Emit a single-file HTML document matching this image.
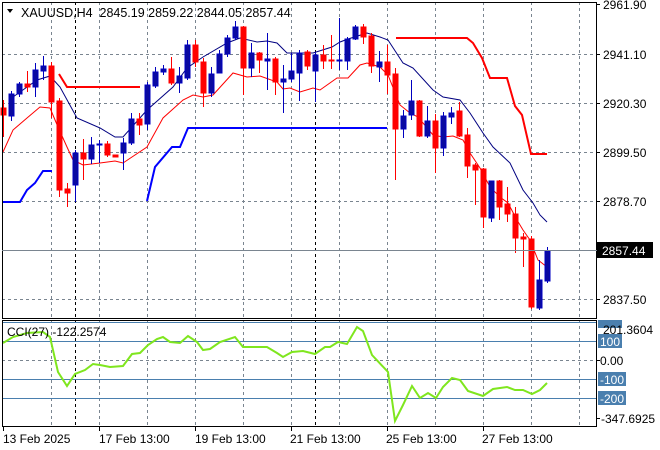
<!DOCTYPE html>
<html><head><meta charset="utf-8"><style>
body{margin:0;background:#fff;width:660px;height:450px;overflow:hidden}
svg{display:block;font-family:"Liberation Sans",sans-serif;font-size:12px}
</style></head><body>
<svg width="660" height="450" viewBox="0 0 660 450" xmlns="http://www.w3.org/2000/svg">
<rect width="660" height="450" fill="#fff"/>
<g stroke="#7a8590" stroke-dasharray="3,3" stroke-width="1">
<line x1="51.5" y1="2" x2="51.5" y2="318"/><line x1="99.5" y1="2" x2="99.5" y2="318"/><line x1="147.5" y1="2" x2="147.5" y2="318"/><line x1="195.5" y1="2" x2="195.5" y2="318"/><line x1="243.5" y1="2" x2="243.5" y2="318"/><line x1="291.5" y1="2" x2="291.5" y2="318"/><line x1="339.5" y1="2" x2="339.5" y2="318"/><line x1="387.5" y1="2" x2="387.5" y2="318"/><line x1="435.5" y1="2" x2="435.5" y2="318"/><line x1="483.5" y1="2" x2="483.5" y2="318"/><line x1="531.5" y1="2" x2="531.5" y2="318"/><line x1="579.5" y1="2" x2="579.5" y2="318"/>
<line x1="51.5" y1="320" x2="51.5" y2="426"/><line x1="99.5" y1="320" x2="99.5" y2="426"/><line x1="147.5" y1="320" x2="147.5" y2="426"/><line x1="195.5" y1="320" x2="195.5" y2="426"/><line x1="243.5" y1="320" x2="243.5" y2="426"/><line x1="291.5" y1="320" x2="291.5" y2="426"/><line x1="339.5" y1="320" x2="339.5" y2="426"/><line x1="387.5" y1="320" x2="387.5" y2="426"/><line x1="435.5" y1="320" x2="435.5" y2="426"/><line x1="483.5" y1="320" x2="483.5" y2="426"/><line x1="531.5" y1="320" x2="531.5" y2="426"/><line x1="579.5" y1="320" x2="579.5" y2="426"/>
<line x1="2" y1="54.5" x2="596" y2="54.5"/><line x1="2" y1="103.5" x2="596" y2="103.5"/><line x1="2" y1="152.5" x2="596" y2="152.5"/><line x1="2" y1="201.5" x2="596" y2="201.5"/><line x1="2" y1="250.5" x2="596" y2="250.5"/><line x1="2" y1="299.5" x2="596" y2="299.5"/>
<line x1="2" y1="360.5" x2="596" y2="360.5"/>
</g>
<g stroke="#000" stroke-dasharray="3,3"><line x1="75.5" y1="2" x2="75.5" y2="318"/><line x1="315.5" y1="2" x2="315.5" y2="318"/><line x1="75.5" y1="320" x2="75.5" y2="426"/><line x1="315.5" y1="320" x2="315.5" y2="426"/></g>
<g stroke="#4a7fae"><line x1="2" y1="322.5" x2="596" y2="322.5"/><line x1="2" y1="341.5" x2="596" y2="341.5"/><line x1="2" y1="379.5" x2="596" y2="379.5"/><line x1="2" y1="398.5" x2="596" y2="398.5"/></g>
<polyline fill="none" stroke="#ff0000" stroke-width="1" points="3,152 13,130 27,118 40,107 50,108 58,127 67,147 73,160 83,165 100,163 115,161 123,163 147,147 163,118 183,100 193,95 203,97 213,95 233,73 247,77 260,76 277,82 283,89 290,88 300,92 313,88 320,90 337,78 348,78 360,65 367,63 380,67 388,75 400,105 410,113 418,117 433,135 443,137 453,136 463,140 470,153 480,168 490,187 500,197 508,203 517,220 523,230 530,240 538,260 547,267"/>
<polyline fill="none" stroke="#000080" stroke-width="1" points="13,97 37,80 50,76 60,87 77,118 100,128 115,137 123,137 147,110 173,87 187,68 203,57 227,43 240,38 257,42 267,41 277,43 287,53 313,53 332,47 340,42 348,39 367,33 380,37 388,40 403,63 413,68 433,90 443,97 460,100 470,113 483,133 493,147 510,163 523,190 533,203 540,215 547,222"/>
<polyline fill="none" stroke="#ff0000" stroke-width="2" points="59,74 67,87 140,87"/>
<polyline fill="none" stroke="#ff0000" stroke-width="2" points="396,38 467,38 473,43 482,58 490,78 507,78 515,106 522,115 531,154 547,154"/>
<polyline fill="none" stroke="#0000ff" stroke-width="2" points="3,202 20,202 27,190 35,183 43,171 52,171"/>
<polyline fill="none" stroke="#0000ff" stroke-width="2" points="147,201 155,167 172,147 180,147 188,128 235,128 387,128"/>
<g stroke-width="1">
<g stroke="#ff0000" fill="#ff0000">
<line x1="3.5" y1="100" x2="3.5" y2="137"/><rect x="1" y="108" width="5" height="7"/>
<line x1="27.5" y1="71" x2="27.5" y2="92"/><rect x="25" y="84" width="5" height="3"/>
<line x1="51.5" y1="62" x2="51.5" y2="118"/><rect x="49" y="66" width="5" height="36"/>
<line x1="59.5" y1="98" x2="59.5" y2="197"/><rect x="57" y="101" width="5" height="89"/>
<line x1="67.5" y1="183" x2="67.5" y2="207"/><rect x="65" y="189" width="5" height="4"/>
<line x1="83.5" y1="139" x2="83.5" y2="180"/><rect x="81" y="153" width="5" height="6"/>
<line x1="107.5" y1="141" x2="107.5" y2="157"/><rect x="105" y="144" width="5" height="11"/>
<rect x="113" y="155" width="5" height="2"/>
<line x1="139.5" y1="113" x2="139.5" y2="135"/><rect x="137" y="119" width="5" height="6"/>
<line x1="171.5" y1="57" x2="171.5" y2="85"/><rect x="169" y="69" width="5" height="14"/>
<line x1="195.5" y1="40" x2="195.5" y2="67"/><rect x="193" y="45" width="5" height="17"/>
<line x1="203.5" y1="58" x2="203.5" y2="107"/><rect x="201" y="62" width="5" height="31"/>
<line x1="243.5" y1="26" x2="243.5" y2="95"/><rect x="241" y="27" width="5" height="41"/>
<line x1="259.5" y1="52" x2="259.5" y2="73"/><rect x="257" y="53" width="5" height="7"/>
<line x1="275.5" y1="57" x2="275.5" y2="95"/><rect x="273" y="59" width="5" height="23"/>
<line x1="307.5" y1="50" x2="307.5" y2="70"/><rect x="305" y="52" width="5" height="14"/>
<line x1="323.5" y1="45" x2="323.5" y2="69"/><rect x="321" y="55" width="5" height="6"/>
<line x1="331.5" y1="35" x2="331.5" y2="69"/><rect x="329" y="60" width="5" height="1"/>
<line x1="363.5" y1="24" x2="363.5" y2="44"/><rect x="361" y="27" width="5" height="10"/>
<line x1="371.5" y1="33" x2="371.5" y2="73"/><rect x="369" y="36" width="5" height="30"/>
<line x1="387.5" y1="45" x2="387.5" y2="94"/><rect x="385" y="62" width="5" height="13"/>
<line x1="395.5" y1="68" x2="395.5" y2="180"/><rect x="393" y="74" width="5" height="55"/>
<line x1="419.5" y1="100" x2="419.5" y2="137"/><rect x="417" y="101" width="5" height="35"/>
<line x1="435.5" y1="114" x2="435.5" y2="173"/><rect x="433" y="121" width="5" height="27"/>
<line x1="459.5" y1="102" x2="459.5" y2="137"/><rect x="457" y="111" width="5" height="25"/>
<line x1="467.5" y1="128" x2="467.5" y2="178"/><rect x="465" y="135" width="5" height="31"/>
<line x1="475.5" y1="163" x2="475.5" y2="205"/><rect x="473" y="165" width="5" height="5"/>
<line x1="483.5" y1="168" x2="483.5" y2="228"/><rect x="481" y="169" width="5" height="48"/>
<line x1="499.5" y1="180" x2="499.5" y2="220"/><rect x="497" y="181" width="5" height="26"/>
<line x1="507.5" y1="187" x2="507.5" y2="222"/><rect x="505" y="204" width="5" height="10"/>
<line x1="515.5" y1="207" x2="515.5" y2="253"/><rect x="513" y="214" width="5" height="24"/>
<line x1="523.5" y1="233" x2="523.5" y2="267"/><rect x="521" y="237" width="5" height="2"/>
<line x1="531.5" y1="236" x2="531.5" y2="309"/><rect x="529" y="239" width="5" height="68"/>
</g>
<g stroke="#0000c0" fill="#0a0aa0">
<line x1="11.5" y1="91" x2="11.5" y2="121"/><rect x="9" y="94" width="5" height="22"/>
<line x1="19.5" y1="82" x2="19.5" y2="97"/><rect x="17" y="84" width="5" height="10"/>
<line x1="35.5" y1="63" x2="35.5" y2="97"/><rect x="33" y="70" width="5" height="17"/>
<line x1="43.5" y1="56" x2="43.5" y2="80"/><rect x="41" y="66" width="5" height="5"/>
<line x1="75.5" y1="150" x2="75.5" y2="202"/><rect x="73" y="153" width="5" height="32"/>
<line x1="91.5" y1="137" x2="91.5" y2="164"/><rect x="89" y="145" width="5" height="14"/>
<line x1="99.5" y1="140" x2="99.5" y2="163"/><rect x="97" y="144" width="5" height="1"/>
<line x1="123.5" y1="138" x2="123.5" y2="170"/><rect x="121" y="143" width="5" height="10"/>
<line x1="131.5" y1="113" x2="131.5" y2="145"/><rect x="129" y="119" width="5" height="24"/>
<line x1="147.5" y1="82" x2="147.5" y2="130"/><rect x="145" y="85" width="5" height="39"/>
<line x1="155.5" y1="67" x2="155.5" y2="88"/><rect x="153" y="72" width="5" height="14"/>
<line x1="163.5" y1="65" x2="163.5" y2="75"/><rect x="161" y="69" width="5" height="3"/>
<line x1="179.5" y1="67" x2="179.5" y2="93"/><rect x="177" y="76" width="5" height="7"/>
<line x1="187.5" y1="40" x2="187.5" y2="80"/><rect x="185" y="45" width="5" height="33"/>
<line x1="211.5" y1="67" x2="211.5" y2="97"/><rect x="209" y="74" width="5" height="19"/>
<line x1="219.5" y1="50" x2="219.5" y2="73"/><rect x="217" y="54" width="5" height="19"/>
<line x1="227.5" y1="35" x2="227.5" y2="57"/><rect x="225" y="38" width="5" height="16"/>
<line x1="235.5" y1="21" x2="235.5" y2="40"/><rect x="233" y="27" width="5" height="11"/>
<line x1="251.5" y1="43" x2="251.5" y2="77"/><rect x="249" y="53" width="5" height="15"/>
<line x1="267.5" y1="33" x2="267.5" y2="90"/><rect x="265" y="59" width="5" height="2"/>
<line x1="283.5" y1="65" x2="283.5" y2="113"/><rect x="281" y="79" width="5" height="3"/>
<line x1="291.5" y1="53" x2="291.5" y2="82"/><rect x="289" y="71" width="5" height="8"/>
<line x1="299.5" y1="50" x2="299.5" y2="101"/><rect x="297" y="53" width="5" height="20"/>
<line x1="315.5" y1="52" x2="315.5" y2="102"/><rect x="313" y="55" width="5" height="16"/>
<line x1="339.5" y1="18" x2="339.5" y2="70"/><rect x="337" y="60" width="5" height="1"/>
<line x1="347.5" y1="37" x2="347.5" y2="70"/><rect x="345" y="39" width="5" height="22"/>
<line x1="355.5" y1="25" x2="355.5" y2="40"/><rect x="353" y="27" width="5" height="12"/>
<line x1="379.5" y1="51" x2="379.5" y2="82"/><rect x="377" y="62" width="5" height="5"/>
<line x1="403.5" y1="110" x2="403.5" y2="138"/><rect x="401" y="116" width="5" height="13"/>
<line x1="411.5" y1="80" x2="411.5" y2="120"/><rect x="409" y="101" width="5" height="14"/>
<line x1="427.5" y1="106" x2="427.5" y2="138"/><rect x="425" y="121" width="5" height="15"/>
<line x1="443.5" y1="112" x2="443.5" y2="156"/><rect x="441" y="116" width="5" height="32"/>
<line x1="451.5" y1="107" x2="451.5" y2="124"/><rect x="449" y="113" width="5" height="4"/>
<line x1="491.5" y1="181" x2="491.5" y2="222"/><rect x="489" y="181" width="5" height="37"/>
<line x1="539.5" y1="260" x2="539.5" y2="310"/><rect x="537" y="280" width="5" height="28"/>
<line x1="547.5" y1="247" x2="547.5" y2="283"/><rect x="545" y="251" width="5" height="30"/>
</g>
</g>
<polyline fill="none" stroke="#7fe61e" stroke-width="2" points="3,343 13,337 27,333 43,332 50,337 58,372 67,386 75,374 85,370 93,364 100,365 110,367 123,366 132,354 140,353 148,345 157,339 163,337 170,342 180,343 188,336 197,342 203,350 210,349 220,342 235,337 243,347 257,347 267,347 277,353 283,357 292,352 303,351 315,354 325,347 330,347 338,342 347,344 357,327 363,331 372,355 388,372 395,421 403,405 412,386 420,398 428,393 436,398 443,387 452,378 460,380 468,391 483,396 493,389 507,387 515,390 523,390 532,394 540,390 547,383"/>
<rect x="2.5" y="2.5" width="594" height="316" fill="none" stroke="#000"/>
<rect x="2.5" y="320.5" width="594" height="106" fill="none" stroke="#000"/>
<line x1="2" y1="250.5" x2="600" y2="250.5" stroke="#7a8590"/>
<g stroke="#000">
<line x1="596" y1="4.5" x2="600" y2="4.5"/><line x1="596" y1="54.5" x2="600" y2="54.5"/><line x1="596" y1="103.5" x2="600" y2="103.5"/><line x1="596" y1="152.5" x2="600" y2="152.5"/><line x1="596" y1="201.5" x2="600" y2="201.5"/><line x1="596" y1="299.5" x2="600" y2="299.5"/>
<line x1="596" y1="360.5" x2="600" y2="360.5"/><line x1="596" y1="418.5" x2="600" y2="418.5"/>
<line x1="3.5" y1="427" x2="3.5" y2="431"/><line x1="99.5" y1="427" x2="99.5" y2="431"/><line x1="195.5" y1="427" x2="195.5" y2="431"/><line x1="291.5" y1="427" x2="291.5" y2="431"/><line x1="387.5" y1="427" x2="387.5" y2="431"/><line x1="483.5" y1="427" x2="483.5" y2="431"/>
</g>
<g fill="#000">
<text x="603" y="9">2961.90</text><text x="603" y="59">2941.10</text><text x="603" y="108">2920.30</text><text x="603" y="157">2899.50</text><text x="603" y="206">2878.70</text><text x="603" y="304">2837.50</text>
</g>
<rect x="597" y="242" width="56" height="16" fill="#000"/>
<text x="602" y="255" fill="#fff">2857.44</text>
<rect x="598" y="320" width="24" height="8" fill="#4a7fae"/>
<rect x="598" y="334" width="24" height="14" fill="#4a7fae"/>
<rect x="598" y="372" width="28" height="14" fill="#4a7fae"/>
<rect x="598" y="391" width="28" height="14" fill="#4a7fae"/>
<text x="603" y="334" fill="#000">201.3604</text>
<text x="600" y="346" fill="#fff">100</text>
<text x="600" y="365" fill="#000">0.00</text>
<text x="600" y="384" fill="#fff">-100</text>
<text x="600" y="403" fill="#fff">-200</text>
<text x="601" y="423" fill="#000">-347.6925</text>
<text x="3" y="443">13 Feb 2025</text><text x="99" y="443">17 Feb 13:00</text><text x="195" y="443">19 Feb 13:00</text><text x="290" y="443">21 Feb 13:00</text><text x="386" y="443">25 Feb 13:00</text><text x="482" y="443">27 Feb 13:00</text>
<path d="M7,9 L13,9 L10,13 Z" fill="#000"/>
<text x="21" y="17" font-size="12.5" xml:space="preserve">XAUUSD,H4  2845.19 2859.22 2844.05 2857.44</text>
<text x="7" y="336">CCI(27) -122.2574</text>
</svg>
</body></html>
